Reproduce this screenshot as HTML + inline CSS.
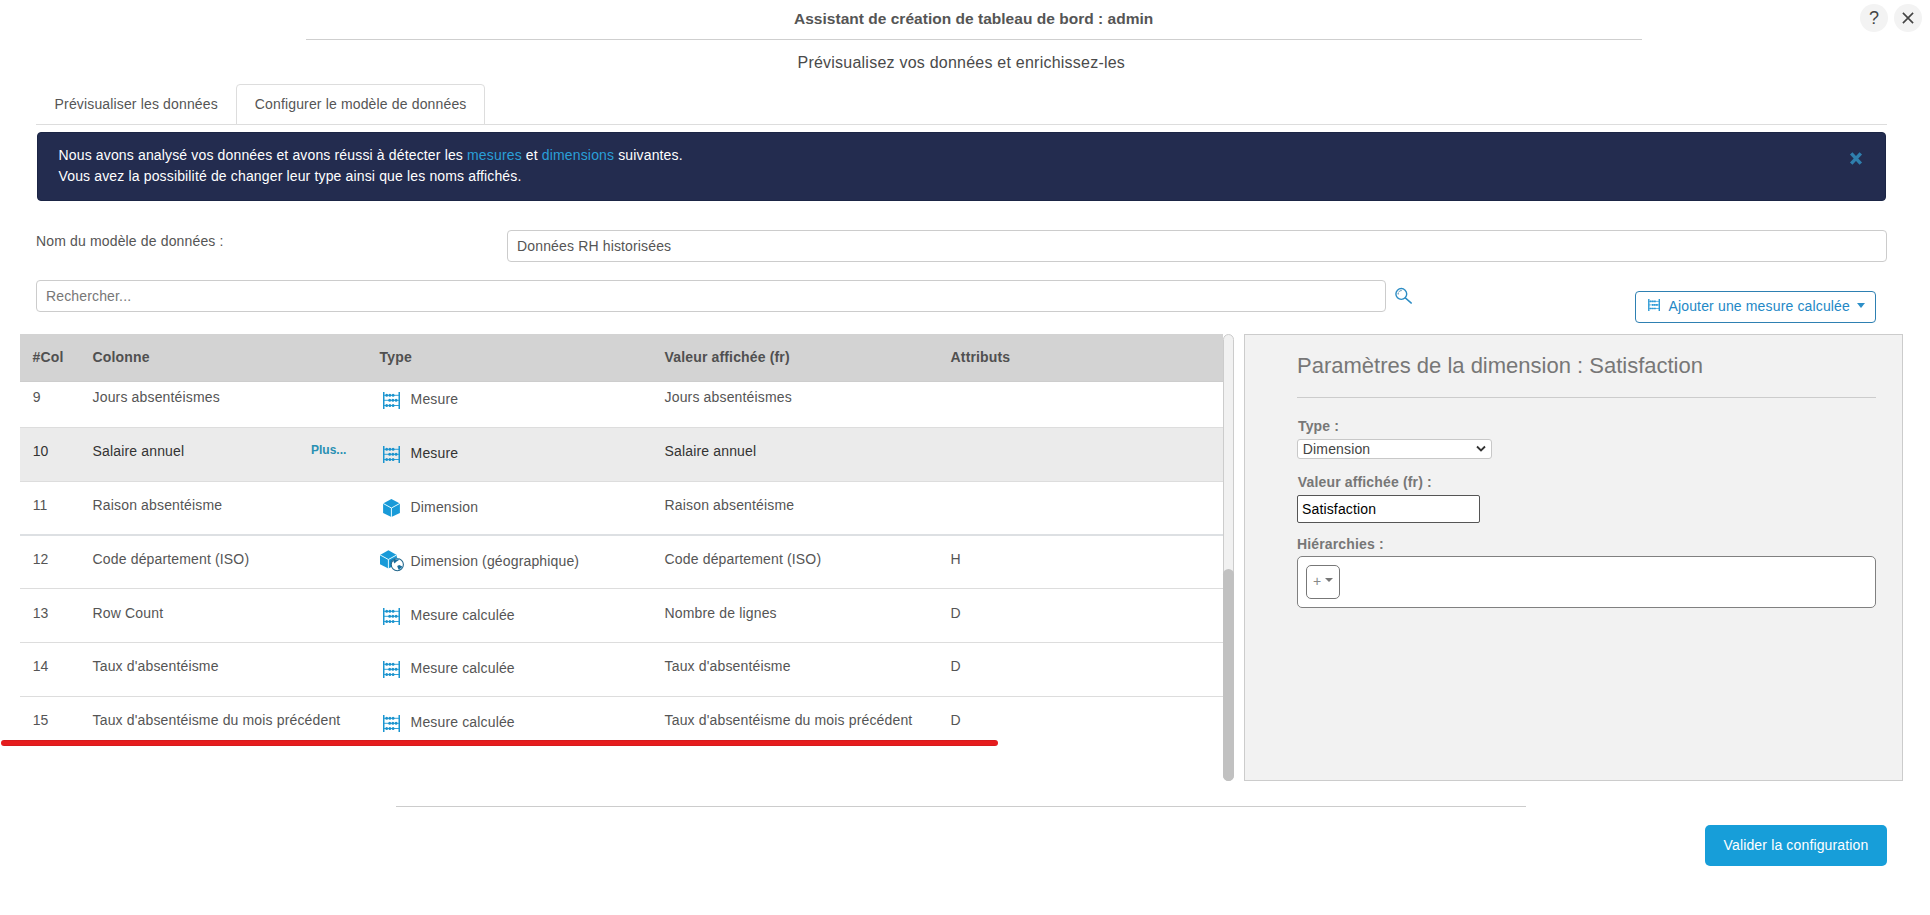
<!DOCTYPE html>
<html><head><meta charset="utf-8">
<style>
*{box-sizing:border-box;margin:0;padding:0}
html,body{width:1930px;height:915px;overflow:hidden;background:#fff}
body{font-family:"Liberation Sans",sans-serif;font-size:14px;color:#555;position:relative}
.abs{position:absolute;white-space:nowrap}
.t{position:absolute;white-space:nowrap;line-height:16px;letter-spacing:0.15px}
.hr{position:absolute;height:1px;background:#ccc}
.th{position:absolute;top:349px;letter-spacing:0.15px;font-weight:bold;color:#505050;line-height:16px;white-space:nowrap}
.row{position:absolute;left:20px;width:1203px;border-top:1px solid #ddd}
.row .t{color:#555}
.ico{position:absolute}
</style></head><body>

<svg width="0" height="0" style="position:absolute"><defs>
<g id="abacus"><path d="M1.75 0.9V17.9M17.25 0.9V17.9" stroke="#1b96d1" stroke-width="1.5" fill="none"/><path d="M1.75 4.3H17.25M1.75 9.3H17.25M1.75 14.5H17.25" stroke="#1b96d1" stroke-width="0.9" fill="none"/><g fill="#1b93cd"><ellipse cx="4.7" cy="4.3" rx="1.4" ry="1.55"/><ellipse cx="7.9" cy="4.3" rx="1.4" ry="1.55"/><ellipse cx="11.1" cy="4.3" rx="1.4" ry="1.55"/><ellipse cx="7.7" cy="9.3" rx="1.4" ry="1.55"/><ellipse cx="10.9" cy="9.3" rx="1.4" ry="1.55"/><ellipse cx="14.1" cy="9.3" rx="1.4" ry="1.55"/><ellipse cx="4.7" cy="14.5" rx="1.4" ry="1.55"/><ellipse cx="7.9" cy="14.5" rx="1.4" ry="1.55"/><ellipse cx="11.1" cy="14.5" rx="1.4" ry="1.55"/></g></g>
<g id="cube"><path d="M9.4 1L17.9 5.4V14.9L9.4 19L1.1 14.9V5.4Z" fill="#189ad8"/><path d="M1.1 5.4L9.4 10L17.9 5.4M9.4 10V19.4" stroke="#e4fbff" stroke-width="1" fill="none"/></g>
<g id="geocube"><path d="M10.4 2.2L18.8 6.9V16.2L10.4 20.6L2 16.2V6.9Z" fill="#189ad8"/><path d="M2 6.9L10.4 11.5L18.8 6.9M10.4 11.5V21" stroke="#e4fbff" stroke-width="1" fill="none"/><path d="M12.2 12.5L19.1 9.2V11.5L15 13L12.6 19.8Z" fill="#1678ad"/><circle cx="19.3" cy="16.6" r="6.3" fill="#fff"/><circle cx="19.3" cy="16.6" r="6.1" fill="none" stroke="#24678c" stroke-width="1.1"/><path d="M15.3 12.6L16.9 10.9L20.9 10.6L21.3 11.8L20.2 12.5L17.9 14L16.7 15.4L15.6 14Z" fill="#1a6c9b"/><path d="M19.2 18L21.2 17L24.3 18.4L23.6 20.3L21 22.2L19.9 20Z" fill="#1a6c9b"/><path d="M17.5 11.3L21 10.9" stroke="#9fdcf5" stroke-width="0.7"/><path d="M21.5 21.3L23.6 19.6" stroke="#9fdcf5" stroke-width="0.7"/></g>
</defs></svg>
<!-- header -->
<div class="t" id="title" style="left:794px;top:9.8px;font-size:15.5px;font-weight:bold;color:#555;line-height:18px;letter-spacing:0.02px">Assistant de création de tableau de bord : admin</div>
<div class="hr" style="left:306px;top:39px;width:1336px;background:#cfcfcf"></div>
<div class="t" id="sub" style="left:797.5px;top:53.5px;font-size:16px;color:#4a4a4a;line-height:18px;letter-spacing:0.23px">Prévisualisez vos données et enrichissez-les</div>

<!-- top-right buttons -->
<div class="abs" style="left:1860px;top:4px;width:28px;height:28px;border-radius:50%;background:#f3f3f3"></div>
<div class="abs" style="left:1894px;top:4px;width:28px;height:28px;border-radius:50%;background:#f3f3f3"></div>
<div class="t" style="left:1869px;top:8px;font-size:18px;color:#444;line-height:20px">?</div>
<svg class="abs" style="left:1901px;top:11px" width="14" height="14" viewBox="0 0 14 14"><path d="M1.9 1.9L12.1 12.1M12.1 1.9L1.9 12.1" stroke="#444" stroke-width="1.6" fill="none"/></svg>

<!-- tabs -->
<div class="hr" style="left:36px;top:124px;width:1851px;background:#ddd"></div>
<div class="abs" style="left:236px;top:84px;width:249px;height:41px;border:1px solid #ddd;border-radius:4px 4px 0 0;background:#fff"></div>
<div class="t" id="tab1" style="left:54.6px;top:96px;color:#555">Prévisualiser les données</div>
<div class="t" id="tab2" style="left:254.8px;top:96px;color:#555">Configurer le modèle de données</div>

<!-- alert -->
<div class="abs" style="left:37px;top:132px;width:1849px;height:69px;background:#232c4f;border:1px solid #1b2545;border-radius:4px"></div>
<div class="t" id="al1" style="left:58.5px;top:147px;color:#fff">Nous avons analysé vos données et avons réussi à détecter les <span style="color:#2a9fd8">mesures</span> et <span style="color:#2a9fd8">dimensions</span> suivantes.</div>
<div class="t" id="al2" style="left:58.5px;top:168px;color:#fff">Vous avez la possibilité de changer leur type ainsi que les noms affichés.</div>
<svg class="abs" style="left:1848.5px;top:150.5px" width="14" height="15" viewBox="0 0 14 15"><path d="M2.2 2.3L11.8 12.7M11.8 2.3L2.2 12.7" stroke="#2f7fad" stroke-width="3.4" fill="none"/></svg>

<!-- model name -->
<div class="t" id="lbl" style="left:36px;top:233px;color:#555">Nom du modèle de données :</div>
<div class="abs" style="left:507px;top:230px;width:1380px;height:32px;border:1px solid #ccc;border-radius:4px;background:#fff"></div>
<div class="t" id="inp" style="left:517px;top:238px;color:#555">Données RH historisées</div>

<!-- search -->
<div class="abs" style="left:36px;top:280px;width:1350px;height:32px;border:1px solid #ccc;border-radius:4px;background:#fff"></div>
<div class="t" id="srch" style="left:46px;top:288px;color:#777">Rechercher...</div>
<svg class="abs" style="left:1394px;top:286px" width="20" height="20" viewBox="0 0 20 20"><circle cx="7.3" cy="7.95" r="5.4" stroke="#2b8cc4" stroke-width="1.4" fill="none"/><path d="M11.3 11.9L17.3 17.1" stroke="#2b8cc4" stroke-width="1.4" stroke-linecap="round"/><path d="M4.2 8.4A3.3 3.3 0 0 1 7.7 4.6" stroke="#2f7099" stroke-width="1" fill="none" stroke-dasharray="1.4 0.7"/></svg>

<!-- add button -->
<div class="abs" style="left:1635px;top:291px;width:241px;height:32px;border:1px solid #2e80b2;border-radius:4px;background:#fff"></div>
<svg class="abs" style="left:1647px;top:298px" width="14" height="14" viewBox="0 0 14 14"><path d="M1.8 1.1V12.9M12.3 1.1V12.9" stroke="#2a99d6" stroke-width="1.4" fill="none"/><path d="M1.8 3.4H12.3M1.8 6.9H12.3M1.8 10.5H12.3" stroke="#2a99d6" stroke-width="0.7" fill="none"/><path d="M3 3.4H8.7M5 6.9H10.9M3 10.5H8.7" stroke="#2a99d6" stroke-width="1.7" stroke-dasharray="1.6 0.45" fill="none"/></svg>
<div class="t" id="addb" style="left:1668.5px;top:298px;color:#2388c6">Ajouter une mesure calculée</div>
<div class="abs" style="left:1857px;top:303px;width:0;height:0;border-left:4.5px solid transparent;border-right:4.5px solid transparent;border-top:5px solid #2c8fc8"></div>

<!-- table header -->
<div class="abs" style="left:20px;top:334px;width:1203px;height:48px;background:#d3d3d3;border-bottom:1px solid #cdcdcd"></div>
<div class="th" style="left:32.6px">#Col</div>
<div class="th" style="left:92.6px">Colonne</div>
<div class="th" style="left:379.6px">Type</div>
<div class="th" style="left:664.6px">Valeur affichée (fr)</div>
<div class="th" style="left:950.6px">Attributs</div>

<div id="rows">
<div class="abs" style="left:20px;top:428px;width:1203px;height:53px;background:#ebebeb"></div>
<div class="hr" style="left:20px;top:427px;width:1203px;background:#ddd"></div>
<div class="hr" style="left:20px;top:481px;width:1203px;background:#ddd"></div>
<div class="hr" style="left:20px;top:588px;width:1203px;background:#ddd"></div>
<div class="hr" style="left:20px;top:642px;width:1203px;background:#ddd"></div>
<div class="hr" style="left:20px;top:696px;width:1203px;background:#ddd"></div>
<div class="abs" style="left:20px;top:534px;width:1203px;height:2px;background:#dde0e3"></div>
<div class="t" style="left:32.7px;top:389px;color:#555">9</div>
<div class="t" style="left:92.6px;top:389px;color:#555">Jours absentéismes</div>
<div class="t" style="left:410.6px;top:391px;color:#555">Mesure</div>
<div class="t" style="left:664.6px;top:389px;color:#555">Jours absentéismes</div>
<svg class="abs" style="left:382px;top:391px" width="19" height="19" viewBox="0 0 19 19"><use href="#abacus"/></svg>
<div class="t" style="left:32.7px;top:443px;color:#333">10</div>
<div class="t" style="left:92.6px;top:443px;color:#333">Salaire annuel</div>
<div class="t" style="left:410.6px;top:445px;color:#333">Mesure</div>
<div class="t" style="left:664.6px;top:443px;color:#333">Salaire annuel</div>
<svg class="abs" style="left:382px;top:445px" width="19" height="19" viewBox="0 0 19 19"><use href="#abacus"/></svg>
<div class="t" style="left:32.7px;top:497px;color:#555">11</div>
<div class="t" style="left:92.6px;top:497px;color:#555">Raison absentéisme</div>
<div class="t" style="left:410.6px;top:499px;color:#555">Dimension</div>
<div class="t" style="left:664.6px;top:497px;color:#555">Raison absentéisme</div>
<svg class="abs" style="left:382px;top:498px" width="19" height="20" viewBox="0 0 19 20"><use href="#cube"/></svg>
<div class="t" style="left:32.7px;top:551px;color:#555">12</div>
<div class="t" style="left:92.6px;top:551px;color:#555">Code département (ISO)</div>
<div class="t" style="left:410.6px;top:553px;color:#555">Dimension (géographique)</div>
<div class="t" style="left:664.6px;top:551px;color:#555">Code département (ISO)</div>
<div class="t" style="left:950.6px;top:551px;color:#555">H</div>
<svg class="abs" style="left:378px;top:548px" width="27" height="25" viewBox="0 0 27 25"><use href="#geocube"/></svg>
<div class="t" style="left:32.7px;top:605px;color:#555">13</div>
<div class="t" style="left:92.6px;top:605px;color:#555">Row Count</div>
<div class="t" style="left:410.6px;top:607px;color:#555">Mesure calculée</div>
<div class="t" style="left:664.6px;top:605px;color:#555">Nombre de lignes</div>
<div class="t" style="left:950.6px;top:605px;color:#555">D</div>
<svg class="abs" style="left:382px;top:607px" width="19" height="19" viewBox="0 0 19 19"><use href="#abacus"/></svg>
<div class="t" style="left:32.7px;top:658px;color:#555">14</div>
<div class="t" style="left:92.6px;top:658px;color:#555">Taux d'absentéisme</div>
<div class="t" style="left:410.6px;top:660px;color:#555">Mesure calculée</div>
<div class="t" style="left:664.6px;top:658px;color:#555">Taux d'absentéisme</div>
<div class="t" style="left:950.6px;top:658px;color:#555">D</div>
<svg class="abs" style="left:382px;top:660px" width="19" height="19" viewBox="0 0 19 19"><use href="#abacus"/></svg>
<div class="t" style="left:32.7px;top:712px;color:#555">15</div>
<div class="t" style="left:92.6px;top:712px;color:#555">Taux d'absentéisme du mois précédent</div>
<div class="t" style="left:410.6px;top:714px;color:#555">Mesure calculée</div>
<div class="t" style="left:664.6px;top:712px;color:#555">Taux d'absentéisme du mois précédent</div>
<div class="t" style="left:950.6px;top:712px;color:#555">D</div>
<svg class="abs" style="left:382px;top:714px" width="19" height="19" viewBox="0 0 19 19"><use href="#abacus"/></svg>
<div class="t" style="left:311px;top:441.8px;color:#2990b3;font-weight:bold;font-size:12px;letter-spacing:0">Plus...</div>
</div><!--endrows-->

<!-- red line -->
<div class="abs" style="left:1px;top:740px;width:997px;height:6px;background:linear-gradient(#cb1a1e 0,#e61c1d 1.3px,#e61c1d 4.7px,#cb1a1e 6px);border-radius:3px"></div>

<!-- scrollbar -->
<div class="abs" style="left:1223px;top:334px;width:11px;height:447px;border:1px solid #ccc;border-radius:6px;background:#f1f1f1"></div>
<div class="abs" style="left:1223px;top:569px;width:11px;height:212px;border-radius:6px;background:#c1c1c1"></div>

<!-- right panel -->
<div class="abs" style="left:1244px;top:334px;width:659px;height:447px;border:1px solid #ccc;background:#f2f2f2"></div>
<div class="t" id="ptitle" style="left:1297px;top:353px;font-size:22px;color:#777;line-height:26px;letter-spacing:0">Paramètres de la dimension : Satisfaction</div>
<div class="hr" style="left:1297px;top:397px;width:579px;background:#ccc"></div>
<div class="t" style="left:1298px;top:418px;font-weight:bold;color:#777">Type :</div>
<div class="abs" style="left:1297px;top:439px;width:195px;height:20px;border:1px solid #c8c8c8;border-radius:3px;background:#fff"></div>
<div class="t" style="left:1302.8px;top:441px;color:#444">Dimension</div>
<svg class="abs" style="left:1476px;top:445px" width="10" height="8" viewBox="0 0 10 8"><path d="M1 1.5L5 5.5L9 1.5" stroke="#333" stroke-width="1.8" fill="none"/></svg>
<div class="t" style="left:1297.8px;top:474px;font-weight:bold;color:#777">Valeur affichée (fr) :</div>
<div class="abs" style="left:1297px;top:495px;width:183px;height:28px;border:1px solid #555;border-radius:2px;background:#fff"></div>
<div class="t" style="left:1302px;top:501.3px;color:#000">Satisfaction</div>
<div class="t" style="left:1297px;top:536px;font-weight:bold;color:#777">Hiérarchies :</div>
<div class="abs" style="left:1297px;top:556px;width:579px;height:52px;border:1px solid #808080;border-radius:5px;background:#fff"></div>
<div class="abs" style="left:1306px;top:565px;width:34px;height:34px;border:1px solid #777;border-radius:5px;background:#fff"></div>
<div class="t" style="left:1313px;top:573px;color:#888;font-size:14px">+</div>
<div class="abs" style="left:1325px;top:578px;width:0;height:0;border-left:4px solid transparent;border-right:4px solid transparent;border-top:4px solid #777"></div>

<!-- footer -->
<div class="hr" style="left:396px;top:806px;width:1130px;background:#ccc"></div>
<div class="abs" style="left:1705px;top:825px;width:182px;height:41px;background:#179ed9;border-radius:5px"></div>
<div class="t" id="valb" style="left:1723.5px;top:836px;color:#fff;font-size:14px;line-height:18px">Valider la configuration</div>

</body></html>
